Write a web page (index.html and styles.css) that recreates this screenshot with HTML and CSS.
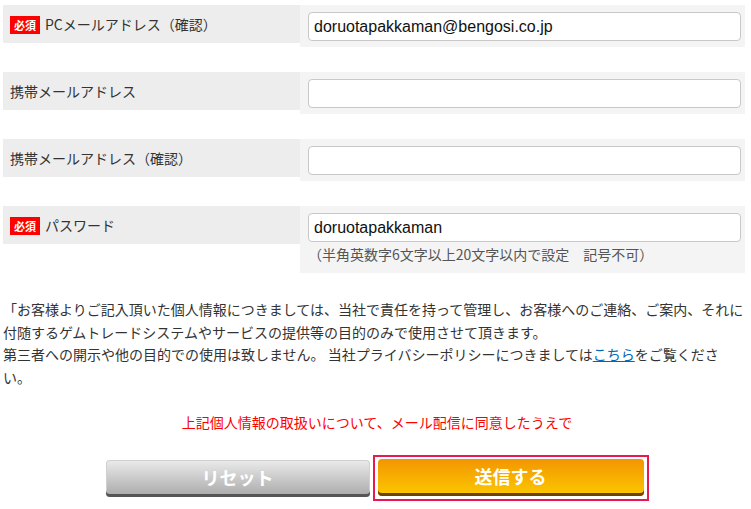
FILE: index.html
```html
<!DOCTYPE html>
<html lang="ja">
<head>
    <meta charset="UTF-8">
    <meta name="viewport" content="width=device-width, initial-scale=1.0">
    <title>会員登録</title>
    <link rel="stylesheet" href="styles.css">
</head>
<body>

<div class="form">
    <div class="row">
        <div class="label"><span class="req">必須</span>PCメールアドレス（確認）</div>
        <div class="field"><input type="text" value="doruotapakkaman@bengosi.co.jp"></div>
    </div>
    <div class="row">
        <div class="label">携帯メールアドレス</div>
        <div class="field"><input type="text"></div>
    </div>
    <div class="row">
        <div class="label">携帯メールアドレス（確認）</div>
        <div class="field"><input type="text"></div>
    </div>
    <div class="row">
        <div class="label"><span class="req">必須</span>パスワード</div>
        <div class="field">
            <input type="text" value="doruotapakkaman">
            <div class="hint">（半角英数字6文字以上20文字以内で設定　記号不可）</div>
        </div>
    </div>
</div>

<p class="notice">「お客様よりご記入頂いた個人情報につきましては、当社で責任を持って管理し、お客様へのご連絡、ご案内、それに付随するゲムトレードシステムやサービスの提供等の目的のみで使用させて頂きます。<br>第三者への開示や他の目的での使用は致しません。 当社プライバシーポリシーにつきましては<a href="#">こちら</a>をご覧ください。</p>

<p class="agree">上記個人情報の取扱いについて、メール配信に同意したうえで</p>

<div class="buttons">
    <button class="btn reset" type="reset">リセット</button>
    <span class="submit-wrap"><button class="btn submit" type="submit">送信する</button></span>
</div>

</body>
</html>
```

FILE: styles.css
```css
body {
    margin: 0;
    padding: 5px 0 0 3px;
    font-family: "Noto Sans CJK JP", "Noto Sans", sans-serif;
    font-size: 14px;
    color: #333;
    background-color: #fff;
}
.form {
    width: 742px;
}
.row {
    display: flex;
    align-items: flex-start;
    margin-bottom: 25px;
}
.label {
    width: 290px;
    height: 38px;
    padding-left: 7px;
    display: flex;
    align-items: center;
    background-color: #ededed;
    line-height: 20px;
}
.req {
    display: inline-block;
    width: 30px;
    height: 18px;
    margin: 2px 5px 0 0;
    background-color: #ff0000;
    color: #fff;
    font-size: 11px;
    font-weight: bold;
    line-height: 18px;
    text-align: center;
}
.field {
    width: 433px;
    padding: 7px 4px 6px 8px;
    background-color: #f4f4f4;
}
.field input {
    display: block;
    box-sizing: border-box;
    width: 433px;
    height: 29px;
    margin: 0;
    padding: 0 5px;
    border: 1px solid #c8c8c8;
    border-radius: 4px;
    background-color: #fff;
    font-family: "Liberation Sans", Arial, sans-serif;
    font-size: 16px;
    color: #111;
}
.hint {
    margin-top: 2px;
    padding-bottom: 3px;
    line-height: 20px;
    color: #555;
}
.notice {
    width: 742px;
    margin: 0;
    line-height: 22.5px;
}
.notice a {
    color: #0068b7;
}
.agree {
    margin: 23px 0 0;
    text-align: center;
    color: #ff0000;
    line-height: 22px;
}
.buttons {
    display: flex;
    justify-content: center;
    align-items: center;
    gap: 3px;
    margin: 22px 0 0;
}
.btn {
    width: 264px;
    height: 37px;
    padding: 0 0 3px;
    border: none;
    border-radius: 4px;
    color: #fff;
    font-family: "Noto Sans CJK JP", "Noto Sans", sans-serif;
    font-size: 18px;
    font-weight: bold;
    cursor: pointer;
}
.reset {
    background: linear-gradient(#ebebeb, #a8a8a8);
    box-shadow: inset 0 -3px 0 #555, inset 0 0 0 1px #d0d0d0;
}
.submit-wrap {
    display: inline-block;
    padding: 2px 3px 3px 3px;
    border: 2px solid #e8194f;
}
.submit {
    display: block;
    width: 266px;
    background: linear-gradient(#f29600, #fcc800);
    box-shadow: inset 0 -3px 0 #6b4200;
}
```
